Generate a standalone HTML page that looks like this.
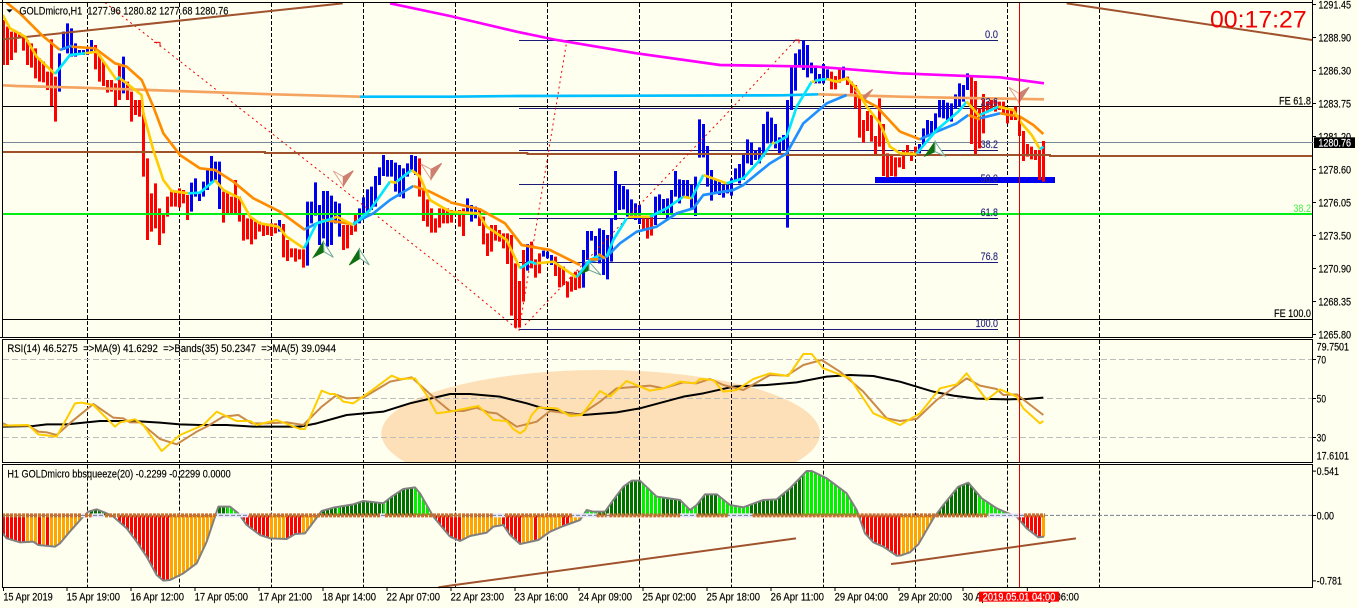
<!DOCTYPE html>
<html><head><meta charset="utf-8"><title>GOLDmicro,H1</title>
<style>
html,body{margin:0;padding:0;background:#FFFFF0;width:1358px;height:608px;overflow:hidden}
svg{display:block}
text{font-family:"Liberation Sans",sans-serif;font-size:33px;fill:#000;stroke:#000;stroke-width:.5;white-space:pre}
.n{fill:none}
.l{fill:none;stroke-linejoin:round;stroke-linecap:butt}
.ma{fill:none;stroke-width:8;stroke-linejoin:round}
.o{stroke:#FF8C00}.b{stroke:#1E90FF}.y{stroke:#FFCC00}.c{stroke:#00E8FF}
.rs{fill:none;stroke-width:6;stroke-linejoin:round}
.t{fill:none;stroke:#A0522D;stroke-width:6}
.sr{stroke:#FF0000;stroke-width:500;fill:none}.so{stroke:#FFA500;stroke-width:500;fill:none}
.sd{stroke:#007000;stroke-width:500;fill:none}.sl{stroke:#00F000;stroke-width:500;fill:none}
.gp{stroke:#FFFFF0;stroke-width:500;stroke-dasharray:3 9;fill:none}
.cv{fill:none;stroke:#808080;stroke-width:6;stroke-linejoin:round}
.dt{fill:none;stroke:#CB6E2C;stroke-width:12;stroke-dasharray:9 3}
.lv{fill:none;stroke:#E6E6FA;stroke-width:12}
text.fib{fill:#2A2A80;stroke:#2A2A80}
</style></head><body>
<svg xmlns="http://www.w3.org/2000/svg" width="1358" height="608" viewBox="0 0 4074 1824" shape-rendering="auto">
<defs>
<clipPath id="cm"><rect x="9" y="9" width="3927" height="1002"/></clipPath>
<clipPath id="cr"><rect x="9" y="1020" width="3927" height="366"/></clipPath>
<clipPath id="s1"><path d="M8 595L20 610 60 622 100 620 115 630 165 635 180 625 205 595 245 550 265 530 290 523 320 535 340 545 380 580 410 620 440 665 470 720 490 737 510 735 550 715 590 685 620 620 650 530 655 515 690 515 715 535 740 570 780 600 810 610 860 612 885 597 915 595 945 555 965 528 1000 518 1060 508 1090 498 1150 505 1175 485 1210 462 1245 457 1260 475 1300 545 1350 605V541H8Z"/></clipPath>
<clipPath id="s2"><path d="M0 605L30 618 60 603 110 593 130 575 160 570 180 600 210 627 265 615 300 590 340 573 390 555 410 525 430 530 465 530 490 495 520 455 545 437 570 437 620 485 690 495 720 525 740 510 765 478 800 478 840 510 880 517 940 495 980 493 1020 460 1070 408 1085 408 1130 430 1190 475 1220 525 1245 595 1270 622 1300 635 1340 662 1350 662V541H0Z"/></clipPath>
<clipPath id="s3"><path d="M0 662L30 652 55 628 100 550 130 510 175 455 205 443 245 490 290 520 320 533 350 545 380 580 415 607 435 605V541H0Z"/></clipPath>
</defs>
<rect width="4074" height="1824" fill="#FFFFF0"/>

<!-- grid -->
<path d="M262.5 9V1011M538.5 9V1011M814.5 9V1011M1090.5 9V1011M1366.5 9V1011M1642.5 9V1011M1918.5 9V1011M2194.5 9V1011M2470.5 9V1011M2746.5 9V1011M3022.5 9V1011M3298.5 9V1011" stroke="#000" stroke-width="3" stroke-dasharray="12 6" fill="none"/>
<path d="M262.5 1020V1386M538.5 1020V1386M814.5 1020V1386M1090.5 1020V1386M1366.5 1020V1386M1642.5 1020V1386M1918.5 1020V1386M2194.5 1020V1386M2470.5 1020V1386M2746.5 1020V1386M3022.5 1020V1386M3298.5 1020V1386" stroke="#000" stroke-width="3" stroke-dasharray="12 6" fill="none"/>
<path d="M262.5 1394V1761M538.5 1394V1761M814.5 1394V1761M1090.5 1394V1761M1366.5 1394V1761M1642.5 1394V1761M1918.5 1394V1761M2194.5 1394V1761M2470.5 1394V1761M2746.5 1394V1761M3022.5 1394V1761M3298.5 1394V1761" stroke="#000" stroke-width="3" stroke-dasharray="12 6" fill="none"/>

<g clip-path="url(#cm)">
<!-- horizontal levels -->
<path d="M9 319.5H3936M9 958.5H3936" stroke="#000" stroke-width="3"/>
<path d="M9 427.5H3936" stroke="#778899" stroke-width="3"/>
<path d="M1557 121.5H2994M1557 325.5H2994M1557 451.5H2994M1557 553.5H2994M1557 655.5H2994M1557 787.5H2994M1557 988.5H2994" stroke="#1B1B78" stroke-width="3"/>
<rect x="2625" y="531" width="540" height="18" fill="#0000F0"/>

<!-- bars z1 -->
<path stroke="#FF0000" stroke-width="9" fill="none" d="M10.5 60V195M22.5 80V195M34.5 95V180M46.5 95V158M58.5 97V115M70.5 110V152M82.5 120V195M94.5 130V203M106.5 145V235M118.5 175V245M130.5 185V247M142.5 215V270M154.5 118V318M166.5 230V365M286.5 135V208M298.5 165V245M310.5 185V258M322.5 240V278M334.5 240V275M346.5 250V318M358.5 195V300M382.5 245V300M394.5 275V365M406.5 300V345M418.5 300V350M430.5 340V530M442.5 475V720M454.5 580V695M466.5 550V685M478.5 625V735M490.5 645V700M502.5 590V650M514.5 575V620M526.5 575V620M538.5 565V622M550.5 570V610M562.5 585V660M670.5 575V668M682.5 575V645M694.5 590V645M706.5 540V645M718.5 590V665M730.5 645V722M742.5 655V718M754.5 655V733M766.5 665V718M778.5 665V695M790.5 675V708M802.5 675V705M814.5 670V708M826.5 670V700M850.5 672V772M862.5 720V783M874.5 745V772M886.5 745V785M898.5 748V778M910.5 748V803M1030.5 675V750M1042.5 675V745M1054.5 675V705M1066.5 645V695M1258.5 475V590M1270.5 570V663M1282.5 598V680M1294.5 625V698M1306.5 655V698M1318.5 625V683M1330.5 625V670M1342.5 625V670"/>
<path stroke="#0000F0" stroke-width="9" fill="none" d="M178.5 160V275M190.5 95V150M202.5 70V160M214.5 85V170M226.5 130V170M238.5 150V165M250.5 150V165M262.5 140V165M274.5 120V160M370.5 170V280M574.5 548V635M586.5 535V590M598.5 575V603M610.5 545V590M622.5 505V570M634.5 468V545M646.5 485V540M658.5 485V627M838.5 660V695M922.5 605V797M934.5 605V670M946.5 547V647M958.5 615V735M970.5 573V715M982.5 573V740M994.5 587V735M1006.5 605V670M1018.5 610V710M1078.5 625V670M1090.5 592V640M1102.5 568V640M1114.5 560V630M1126.5 528V620M1138.5 502V555M1150.5 465V528M1162.5 480V530M1174.5 480V530M1186.5 488V575M1198.5 495V590M1210.5 505V595M1222.5 490V530M1234.5 465V510M1246.5 468V525"/>

<g transform="translate(1350,0)">
<path stroke="#FF0000" stroke-width="9" fill="none" d="M4.5 630V668M16.5 635V645M28.5 630V680M40.5 625V708M88.5 625V678M100.5 650V733M112.5 700V768M124.5 675V755M136.5 675V722M148.5 690V725M160.5 700V745M172.5 700V792M184.5 705V947M196.5 790V983M208.5 843V983M220.5 750V905M244.5 725V805M256.5 778V833M268.5 760V820M316.5 770V828M328.5 800V862M340.5 800V855M352.5 845V893M364.5 830V875M376.5 815V870M388.5 812V865M580.5 655V690M592.5 655V716M604.5 650V707M1144.5 215V268M1156.5 228V268M1168.5 208V248M1192.5 230V255M1204.5 245V280M1216.5 255V325M1228.5 290V413M1240.5 360V428M1252.5 333V393M1264.5 345V425M1276.5 408V462M1288.5 295V440M1300.5 372V528M1312.5 460V532M1324.5 462V528M1336.5 472V530M1348.5 472V502"/>
<path stroke="#0000F0" stroke-width="9" fill="none" d="M52.5 595V640M64.5 615V665M76.5 620V655M232.5 732V812M280.5 752V770M292.5 755V775M304.5 765V795M400.5 750V863M412.5 693V780M424.5 693V722M436.5 708V770M448.5 685V790M460.5 690V825M472.5 705V838M484.5 655V785M496.5 513V660M508.5 553V630M520.5 558V628M532.5 568V650M544.5 598V650M556.5 610V660M568.5 615V672M616.5 590V675M628.5 583V645M640.5 597V640M652.5 595V660M664.5 570V640M676.5 513V590M688.5 538V610M700.5 540V590M712.5 540V590M724.5 555V625M736.5 530V648M748.5 358V473M760.5 372V472M772.5 438V560M784.5 510V602M796.5 540V580M808.5 545V585M820.5 555V593M832.5 555V580M844.5 535V587M856.5 505V545M868.5 492V550M880.5 465V540M892.5 418V490M904.5 428V495M916.5 452V480M928.5 442V490M940.5 372V470M952.5 335V430M964.5 353V430M976.5 372V445M988.5 412V460M1000.5 405V450M1012.5 300V683M1024.5 198V330M1036.5 160V272M1048.5 148V196M1060.5 122V210M1072.5 135V232M1084.5 188V220M1096.5 200V250M1108.5 222V250M1120.5 192V250M1132.5 208V237M1180.5 200V240"/>
</g>
<g transform="translate(2700,0)">
<path stroke="#FF0000" stroke-width="9" fill="none" d="M10.5 450V507M22.5 435V463M34.5 455V483M46.5 440V468M214.5 230V432M226.5 243V462M238.5 325V445M250.5 282V400M262.5 305V338M274.5 300V330M286.5 300V335M298.5 305V330M310.5 305V345M322.5 330V370M334.5 325V360M346.5 320V360M358.5 350V408M370.5 393V483M382.5 432V470M394.5 440V478M406.5 450V480M418.5 450V540M430.5 423V545"/>
<path stroke="#0000F0" stroke-width="9" fill="none" d="M58.5 432V460M70.5 385V435M82.5 360V410M94.5 363V400M106.5 340V395M118.5 300V352M130.5 300V355M142.5 308V360M154.5 310V365M166.5 283V325M178.5 250V320M190.5 255V305M202.5 220V270"/>
</g>

<!-- horizontal thick -->
<path d="M9 456H795V459H1582V462H2360V465H3150V468H3936" fill="none" stroke="#A0522D" stroke-width="6"/>
<path d="M9 642H3936" stroke="#00EE11" stroke-width="6"/>

<!-- dotted zigzag -->
<path d="M315 8L465 125 1350 820 1525 965 1557 992" fill="none" stroke="#F00000" stroke-width="3" stroke-dasharray="6 10"/>
<path d="M1557 992L1700 125" fill="none" stroke="#F00000" stroke-width="3" stroke-dasharray="6 10"/>
<path d="M1575 975L2200 320 2385 122" fill="none" stroke="#F00000" stroke-width="3" stroke-dasharray="6 10"/>
<path d="M462 127H480V140M2385 120H2397V130" fill="none" stroke="#F00000" stroke-width="3"/>

<!-- tan/blue MA200-ish, magenta -->
<path d="M9 256L50 258 245 263 530 273 820 283 1080 290" fill="none" stroke="#F4A460" stroke-width="8"/>
<path d="M1080 290H1350L1555 288 2345 286 2455 283" fill="none" stroke="#00BFFF" stroke-width="8"/>
<path d="M2455 283L2700 290 2790 292 3132 298" fill="none" stroke="#F4A460" stroke-width="8"/>
<path d="M1170 10L1350 48 1550 95 1670 120 1910 160 2160 195 2450 200 2700 220 3000 232 3132 250" fill="none" stroke="#FF00FF" stroke-width="8"/>
<path d="M9 118L1028 10" fill="none" stroke="#A0522D" stroke-width="6"/>
<path d="M3200 10L3937 120" fill="none" stroke="#A0522D" stroke-width="6"/>

<!-- arrows -->
<g stroke-width="3" stroke-linejoin="miter">
<path d="M1000 513L1030 530V558Z" fill="#FFFFF0" stroke="#E0A090"/><path d="M1060 512L1030 530V558Z" fill="#CC8070" stroke="#CC8070"/>
<path d="M1263 492L1293 508V538Z" fill="#FFFFF0" stroke="#E0A090"/><path d="M1325 490L1293 508V538Z" fill="#CC8070" stroke="#CC8070"/>
<path d="M2563 270L2590 288V306Z" fill="#FFFFF0" stroke="#E0A090"/><path d="M2618 268L2590 288V306Z" fill="#CC8070" stroke="#CC8070"/>
<path d="M3027 262L3057 280V308Z" fill="#FFFFF0" stroke="#E0A090"/><path d="M3087 262L3057 280V308Z" fill="#CC8070" stroke="#CC8070"/>
<path d="M970 725L940 772 972 755Z" fill="#107010" stroke="#107010"/><path d="M970 725L1000 772 972 755Z" fill="#FFFFF0" stroke="#6FA89A"/>
<path d="M1078 747L1048 795 1080 775Z" fill="#107010" stroke="#107010"/><path d="M1078 747L1108 795 1080 775Z" fill="#FFFFF0" stroke="#6FA89A"/>
<path d="M1767 785L1735 825 1767 810Z" fill="#107010" stroke="#107010"/><path d="M1767 785L1803 825 1767 810Z" fill="#FFFFF0" stroke="#6FA89A"/>
<path d="M2805 425L2775 468 2805 455Z" fill="#107010" stroke="#107010"/><path d="M2805 425L2835 468 2805 455Z" fill="#FFFFF0" stroke="#6FA89A"/>
</g>

<!-- fast/slow MAs z1 -->
<path class="ma o" d="M20 8L60 40 125 105 180 150"/>
<path class="ma b" d="M180 150L215 137"/>
<path class="ma o" d="M215 140L285 145 345 190 380 200 425 240 460 320 490 400 540 465 600 505 645 510 700 545 760 595 840 635 915 690"/>
<path class="ma b" d="M915 688L960 665"/>
<path class="ma o" d="M965 660L1010 665 1055 672"/>
<path class="ma b" d="M1060 670L1120 640 1170 600 1240 558"/>
<path class="ma o" d="M1240 558L1290 575 1350 605"/>
<path class="ma y" d="M8 45L30 85 75 110 110 170 165 222"/>
<path class="ma c" d="M165 222L210 165 255 160"/>
<path class="ma y" d="M255 160L290 155 350 240"/>
<path class="ma c" d="M350 240L360 230"/>
<path class="ma y" d="M360 235L425 285 430 340 460 450 490 540 515 573 565 580"/>
<path class="ma c" d="M565 580L600 578 645 540"/>
<path class="ma y" d="M645 540L670 570 720 595 750 650 780 670 835 680 860 710 912 745"/>
<path class="ma c" d="M912 745L950 670 1000 655"/>
<path class="ma y" d="M1000 655L1010 650 1060 675"/>
<path class="ma c" d="M1060 675L1110 630 1170 545"/>
<path class="ma y" d="M1170 545L1190 548"/>
<path class="ma c" d="M1190 545L1235 510"/>
<path class="ma y" d="M1235 510L1260 530 1290 600 1350 635"/>
<!-- z2 -->
<g transform="translate(1350,0)">
<path class="ma o" d="M0 607L90 628 165 670 215 735 300 750 390 795"/>
<path class="ma b" d="M405 790L470 770 510 730 560 695 620 680 680 640 730 625 760 585 850 570 880 555 960 490 1010 460 1060 370 1130 310 1190 285"/>
<path class="ma o" d="M1215 285L1280 320 1350 395"/>
<path class="ma y" d="M0 635L85 640 110 680 170 720 210 805"/>
<path class="ma c" d="M210 805L240 785 260 792"/>
<path class="ma y" d="M260 790L310 785 380 832"/>
<path class="ma c" d="M380 832L420 780 450 765"/>
<path class="ma o" d="M420 778L445 778M445 762L465 775"/>
<path class="ma c" d="M470 770L490 720 530 655"/>
<path class="ma y" d="M535 650L600 650"/>
<path class="ma c" d="M600 650L650 625 700 590"/>
<path class="ma y" d="M700 590L725 595"/>
<path class="ma c" d="M725 595L760 525"/>
<path class="ma y" d="M760 525L830 550"/>
<path class="ma c" d="M830 550L880 535 930 480 965 430"/>
<path class="ma y" d="M965 428L975 430"/>
<path class="ma c" d="M975 430L1010 410 1040 320 1085 245"/>
<path class="ma y" d="M1085 245L1095 245"/>
<path class="ma c" d="M1095 242L1130 237"/>
<path class="ma y" d="M1130 237L1160 245 1190 235 1220 265 1250 320 1290 370 1320 440 1350 460"/>
</g>
<!-- z3 -->
<g transform="translate(2700,0)">
<path class="ma o" d="M0 395L60 418"/>
<path class="ma b" d="M60 418L110 395 170 370 205 345"/>
<path class="ma o" d="M205 345L240 358"/>
<path class="ma b" d="M240 355L300 340"/>
<path class="ma o" d="M300 340L360 350 400 375 430 402"/>
<path class="ma y" d="M0 460L50 462"/>
<path class="ma c" d="M50 460L110 390 175 335 200 305"/>
<path class="ma y" d="M200 305L240 350"/>
<path class="ma c" d="M240 345L295 320"/>
<path class="ma y" d="M295 320L340 330 365 370 395 405 420 448"/>
<path class="ma c" d="M420 448L430 440"/>
</g>
<!-- current-time line -->
<path d="M3058.5 9V1011" stroke="#E00000" stroke-width="3"/>
</g>

<!-- RSI panel -->
<g clip-path="url(#cr)">
<ellipse cx="1802" cy="1300" rx="658" ry="190" fill="#FDE0B8"/>
<path d="M262.5 1020V1386M538.5 1020V1386M814.5 1020V1386M1090.5 1020V1386M1366.5 1020V1386M1642.5 1020V1386M1918.5 1020V1386M2194.5 1020V1386M2470.5 1020V1386" stroke="#000" stroke-width="3" stroke-dasharray="12 6" fill="none"/>
<path d="M9 1078.5H3936M9 1195.5H3936M9 1312.5H3936" stroke="#BDBDBD" stroke-width="3" stroke-dasharray="18 9" fill="none"/>
<g transform="translate(0,1005)">
<path class="rs" stroke="#000" d="M8 275L100 273 140 268 200 268 300 258 400 258 480 263 540 268 600 270 680 270 760 275 900 275 950 265 1040 240 1150 230 1230 205 1350 177 1410 177 1500 185 1580 205 1620 217 1690 232 1750 240 1850 232 1920 220 2050 185 2110 175 2200 155 2300 150 2390 142 2480 125 2550 120 2620 123 2700 140 2750 155 2800 170 2860 182 2930 191 3020 193 3080 192 3130 188"/>
<path class="rs" stroke="#C98A48" d="M8 265L25 272 85 272 115 290 140 292 170 300 215 260 280 207 340 248 370 250 390 262 420 262 480 312 530 328 590 290 620 275 670 245 715 240 755 265 800 265 860 262 910 270 965 215 1010 180 1040 190 1090 188 1170 140 1235 127 1310 195 1350 228 1390 228 1430 218 1465 232 1490 235 1550 275 1610 260 1650 228 1740 240 1800 200 1850 160 1950 152 1990 160 2050 142 2090 145 2130 132 2170 150 2230 165 2310 120 2360 122 2410 90 2465 75 2520 110 2590 170 2660 250 2700 258 2750 252 2810 195 2900 130 2940 152 2990 162 3010 180 3050 178 3130 240"/>
<path class="rs" stroke="#FFCC00" d="M8 272L85 270 115 298 170 305 225 205 245 203 280 210 345 275 360 262 405 253 430 270 485 348 540 300 610 270 650 230 710 258 750 258 770 270 830 255 900 282 915 282 965 167 990 177 1005 177 1030 200 1060 205 1110 170 1175 122 1200 132 1245 130 1280 180 1310 235 1350 230 1435 213 1480 255 1520 258 1540 282 1560 295 1575 285 1595 240 1615 218 1670 220 1710 243 1745 240 1800 168 1830 185 1880 138 1950 167 1990 160 2040 140 2085 145 2100 132 2140 135 2170 170 2210 165 2260 132 2310 115 2365 123 2410 57 2435 57 2470 100 2550 130 2620 235 2700 270 2760 235 2820 160 2870 148 2900 115 2960 195 3000 163 3050 185 3070 220 3120 265 3130 258"/>
</g>
<path d="M3058.5 1020V1386" stroke="#E00000" stroke-width="3"/>
</g>

<!-- Squeeze -->
<g transform="translate(0,1005)">
<g clip-path="url(#s1)">
<path class="sr" d="M3 541H75M111 541H123M135 541H147M351 541H507M723 541H807M855 541H903M1299 541H1350"/>
<path class="so" d="M75 541H111M123 541H135M147 541H255M507 541H650M807 541H855M903 541H960"/>
<path class="sd" d="M270 541H315M650 541H680M960 541H1010M1020 541H1150M1160 541H1240"/>
<path class="sl" d="M680 541H722M1010 541H1020M1150 541H1160M1240 541H1299"/>
<path class="gp" d="M3 541H1350"/>
</g>
<path class="cv" d="M8 595L20 610 60 622 100 620 115 630 165 635 180 625 205 595 245 550 265 530 290 523 320 535 340 545 380 580 410 620 440 665 470 720 490 737 510 735 550 715 590 685 620 620 650 530 655 515 690 515 715 535 740 570 780 600 810 610 860 612 885 597 915 595 945 555 965 528 1000 518 1060 508 1090 498 1150 505 1175 485 1210 462 1245 457 1260 475 1300 545 1350 605"/>
<path class="lv" d="M245 541H255M275 541H312M650 541H745M1140 541H1155"/>
<path d="M9 541H1350" stroke="#708090" stroke-width="3" stroke-dasharray="12 6" fill="none"/>
<path class="dt" d="M6 541H245M255 541H275M315 541H650M747 541H1140M1155 541H1350"/>
<path d="M1315 757L1350 752" class="t"/>
</g>
<g transform="translate(1350,1005)">
<g clip-path="url(#s2)">
<path class="sr" d="M-3 541H33M153 541H213M249 541H261M333 541H357M1225 541H1350"/>
<path class="so" d="M33 541H153M213 541H249M261 541H333M357 541H400"/>
<path class="sd" d="M440 541H573M633 541H693M741 541H801M897 541H1060"/>
<path class="sl" d="M400 541H440M573 541H633M693 541H741M801 541H897M1060 541H1225"/>
<path class="gp" d="M-3 541H1350"/>
</g>
<path class="cv" d="M0 605L30 618 60 603 110 593 130 575 160 570 180 600 210 627 265 615 300 590 340 573 390 555 410 525 430 530 465 530 490 495 520 455 545 437 570 437 620 485 690 495 720 525 740 510 765 478 800 478 840 510 880 517 940 495 980 493 1020 460 1070 408 1085 408 1130 430 1190 475 1220 525 1245 595 1270 622 1300 635 1340 662 1350 662"/>
<path class="lv" d="M128 541H165M368 541H440M470 541H478M690 541H740M835 541H908"/>
<path d="M0 541H1350" stroke="#708090" stroke-width="3" stroke-dasharray="12 6" fill="none"/>
<path class="dt" d="M0 541H128M165 541H368M440 541H470M478 541H690M740 541H835M908 541H1350"/>
<path d="M0 752L1038 610M1323 687L1350 684" class="t"/>
</g>
<g transform="translate(2700,1005)">
<g clip-path="url(#s3)">
<path class="so" d="M0 541H105M423 541H440"/>
<path class="sd" d="M105 541H231"/>
<path class="sl" d="M231 541H330"/>
<path class="sr" d="M350 541H423"/>
<path class="gp" d="M3 541H440"/>
</g>
<path class="cv" d="M0 662L30 652 55 628 100 550 130 510 175 455 205 443 245 490 290 520 320 533 350 545 380 580 415 607 432 605"/>
<path class="lv" d="M265 541H372"/>
<path d="M0 541H1238" stroke="#708090" stroke-width="3" stroke-dasharray="12 6" fill="none"/>
<path class="dt" d="M0 541H265M372 541H435"/>
<path d="M0 684L528 610" class="t"/>
<path d="M358.5 390V757" stroke="#E00000" stroke-width="3"/>
</g>

<!-- frames -->
<path d="M7.5 0V1014M0 7.5H3939M3937.5 0V1014M0 1012.5H3939" fill="none" stroke="#000" stroke-width="3"/>
<path d="M7.5 1017V1389M7.5 1018.5H3939M3937.5 1017V1389M7.5 1387.5H3939" fill="none" stroke="#000" stroke-width="3"/>
<path d="M7.5 1392V1764M7.5 1393.5H3939M3937.5 1392V1764M7.5 1762.5H3939" fill="none" stroke="#000" stroke-width="3"/>
<!-- ticks -->
<path d="M3939 13.5h9M3939 112.5h9M3939 211.5h9M3939 310.5h9M3939 409.5h9M3939 508.5h9M3939 607.5h9M3939 706.5h9M3939 805.5h9M3939 904.5h9M3939 1003.5h9M3939 1078.5h9M3939 1195.5h9M3939 1312.5h9M3939 1546.5h9M3939 1413.5h9M3939 1742.5h9" stroke="#000" stroke-width="3"/>
<path d="M10.5 1764v9M201 1764v9M393 1764v9M585 1764v9M777 1764v9M969 1764v9M1161 1764v9M1353 1764v9M1545 1764v9M1737 1764v9M1929 1764v9M2121 1764v9M2313 1764v9M2505 1764v9M2697 1764v9M2889 1764v9M3082 1764v9" stroke="#000" stroke-width="3"/>

<!-- top texts -->
<path d="M19 28H38L28.5 38Z" fill="#000"/>
<text x="58" y="43" xml:space="preserve" textLength="627" lengthAdjust="spacingAndGlyphs">GOLDmicro,H1  1277.96 1280.82 1277.68 1280.76</text>
<text x="3630" y="83" style="font-size:72px;fill:#F00000;stroke:none" textLength="290" lengthAdjust="spacingAndGlyphs">00:17:27</text>

<!-- fib labels -->
<text class="fib" x="2955" y="114" textLength="39" lengthAdjust="spacingAndGlyphs">0.0</text>
<text class="fib" x="2942" y="316" textLength="52" lengthAdjust="spacingAndGlyphs">23.6</text>
<text class="fib" x="2942" y="444" textLength="52" lengthAdjust="spacingAndGlyphs">38.2</text>
<text class="fib" x="2942" y="546" textLength="52" lengthAdjust="spacingAndGlyphs">50.0</text>
<text class="fib" x="2942" y="648" textLength="52" lengthAdjust="spacingAndGlyphs">61.8</text>
<text class="fib" x="2942" y="780" textLength="52" lengthAdjust="spacingAndGlyphs">76.8</text>
<text class="fib" x="2927" y="981" textLength="67" lengthAdjust="spacingAndGlyphs">100.0</text>
<text x="3837" y="313" textLength="96" lengthAdjust="spacingAndGlyphs">FE 61.8</text>
<text x="3822" y="951" textLength="111" lengthAdjust="spacingAndGlyphs">FE 100.0</text>
<text x="3880" y="636" style="fill:#44EE44;stroke:none" textLength="53" lengthAdjust="spacingAndGlyphs">38.2</text>

<!-- right axis -->
<text x="3955" y="25" textLength="98" lengthAdjust="spacingAndGlyphs">1291.45</text>
<text x="3955" y="124" textLength="98" lengthAdjust="spacingAndGlyphs">1288.90</text>
<text x="3955" y="223" textLength="98" lengthAdjust="spacingAndGlyphs">1286.30</text>
<text x="3955" y="322" textLength="98" lengthAdjust="spacingAndGlyphs">1283.75</text>
<text x="3955" y="421" textLength="98" lengthAdjust="spacingAndGlyphs">1281.20</text>
<text x="3955" y="520" textLength="98" lengthAdjust="spacingAndGlyphs">1278.60</text>
<text x="3955" y="619" textLength="98" lengthAdjust="spacingAndGlyphs">1276.05</text>
<text x="3955" y="718" textLength="98" lengthAdjust="spacingAndGlyphs">1273.50</text>
<text x="3955" y="817" textLength="98" lengthAdjust="spacingAndGlyphs">1270.90</text>
<text x="3955" y="916" textLength="98" lengthAdjust="spacingAndGlyphs">1268.35</text>
<text x="3955" y="1015" textLength="98" lengthAdjust="spacingAndGlyphs">1265.80</text>
<rect x="3942" y="412" width="123" height="32" fill="#000"/>
<path d="M3936 427.5H3942" stroke="#778899" stroke-width="3"/>
<text x="3955" y="439" style="fill:#fff;stroke:#fff" textLength="98" lengthAdjust="spacingAndGlyphs">1280.76</text>

<!-- RSI labels -->
<text x="22" y="1056" xml:space="preserve" textLength="986" lengthAdjust="spacingAndGlyphs">RSI(14) 46.5275  =&gt;MA(9) 41.6292  =&gt;Bands(35) 50.2347  =&gt;MA(5) 39.0944</text>
<text x="3950" y="1052" textLength="97" lengthAdjust="spacingAndGlyphs">79.7501</text>
<text x="3950" y="1090" textLength="28" lengthAdjust="spacingAndGlyphs">70</text>
<text x="3950" y="1207" textLength="28" lengthAdjust="spacingAndGlyphs">50</text>
<text x="3950" y="1324" textLength="28" lengthAdjust="spacingAndGlyphs">30</text>
<text x="3950" y="1379" textLength="97" lengthAdjust="spacingAndGlyphs">17.6101</text>

<!-- squeeze labels -->
<text x="22" y="1432" textLength="670" lengthAdjust="spacingAndGlyphs">H1 GOLDmicro bbsqueeze(20) -0.2299 -0.2299 0.0000</text>
<text x="3950" y="1425" textLength="67" lengthAdjust="spacingAndGlyphs">0.541</text>
<text x="3950" y="1558" textLength="52" lengthAdjust="spacingAndGlyphs">0.00</text>
<text x="3950" y="1754" textLength="76" lengthAdjust="spacingAndGlyphs">-0.781</text>

<!-- time labels -->
<text x="10" y="1802" textLength="148" lengthAdjust="spacingAndGlyphs">15 Apr 2019</text>
<text x="200" y="1802" textLength="160" lengthAdjust="spacingAndGlyphs">15 Apr 19:00</text>
<text x="392" y="1802" textLength="160" lengthAdjust="spacingAndGlyphs">16 Apr 12:00</text>
<text x="584" y="1802" textLength="160" lengthAdjust="spacingAndGlyphs">17 Apr 05:00</text>
<text x="776" y="1802" textLength="160" lengthAdjust="spacingAndGlyphs">17 Apr 21:00</text>
<text x="968" y="1802" textLength="160" lengthAdjust="spacingAndGlyphs">18 Apr 14:00</text>
<text x="1160" y="1802" textLength="160" lengthAdjust="spacingAndGlyphs">22 Apr 07:00</text>
<text x="1352" y="1802" textLength="160" lengthAdjust="spacingAndGlyphs">22 Apr 23:00</text>
<text x="1544" y="1802" textLength="160" lengthAdjust="spacingAndGlyphs">23 Apr 16:00</text>
<text x="1736" y="1802" textLength="160" lengthAdjust="spacingAndGlyphs">24 Apr 09:00</text>
<text x="1928" y="1802" textLength="160" lengthAdjust="spacingAndGlyphs">25 Apr 02:00</text>
<text x="2120" y="1802" textLength="160" lengthAdjust="spacingAndGlyphs">25 Apr 18:00</text>
<text x="2312" y="1802" textLength="160" lengthAdjust="spacingAndGlyphs">26 Apr 11:00</text>
<text x="2504" y="1802" textLength="160" lengthAdjust="spacingAndGlyphs">29 Apr 04:00</text>
<text x="2696" y="1802" textLength="160" lengthAdjust="spacingAndGlyphs">29 Apr 20:00</text>
<text x="2888" y="1802" textLength="160" lengthAdjust="spacingAndGlyphs">30 Apr 12:00</text>
<text x="3082" y="1802" textLength="155" lengthAdjust="spacingAndGlyphs">1 May 06:00</text>
<rect x="2937" y="1775" width="240" height="30" fill="#FF0000"/>
<text x="2948" y="1802" style="fill:#fff;stroke:#fff" textLength="218" lengthAdjust="spacingAndGlyphs">2019.05.01 04:00</text>
</svg>
</body></html>
